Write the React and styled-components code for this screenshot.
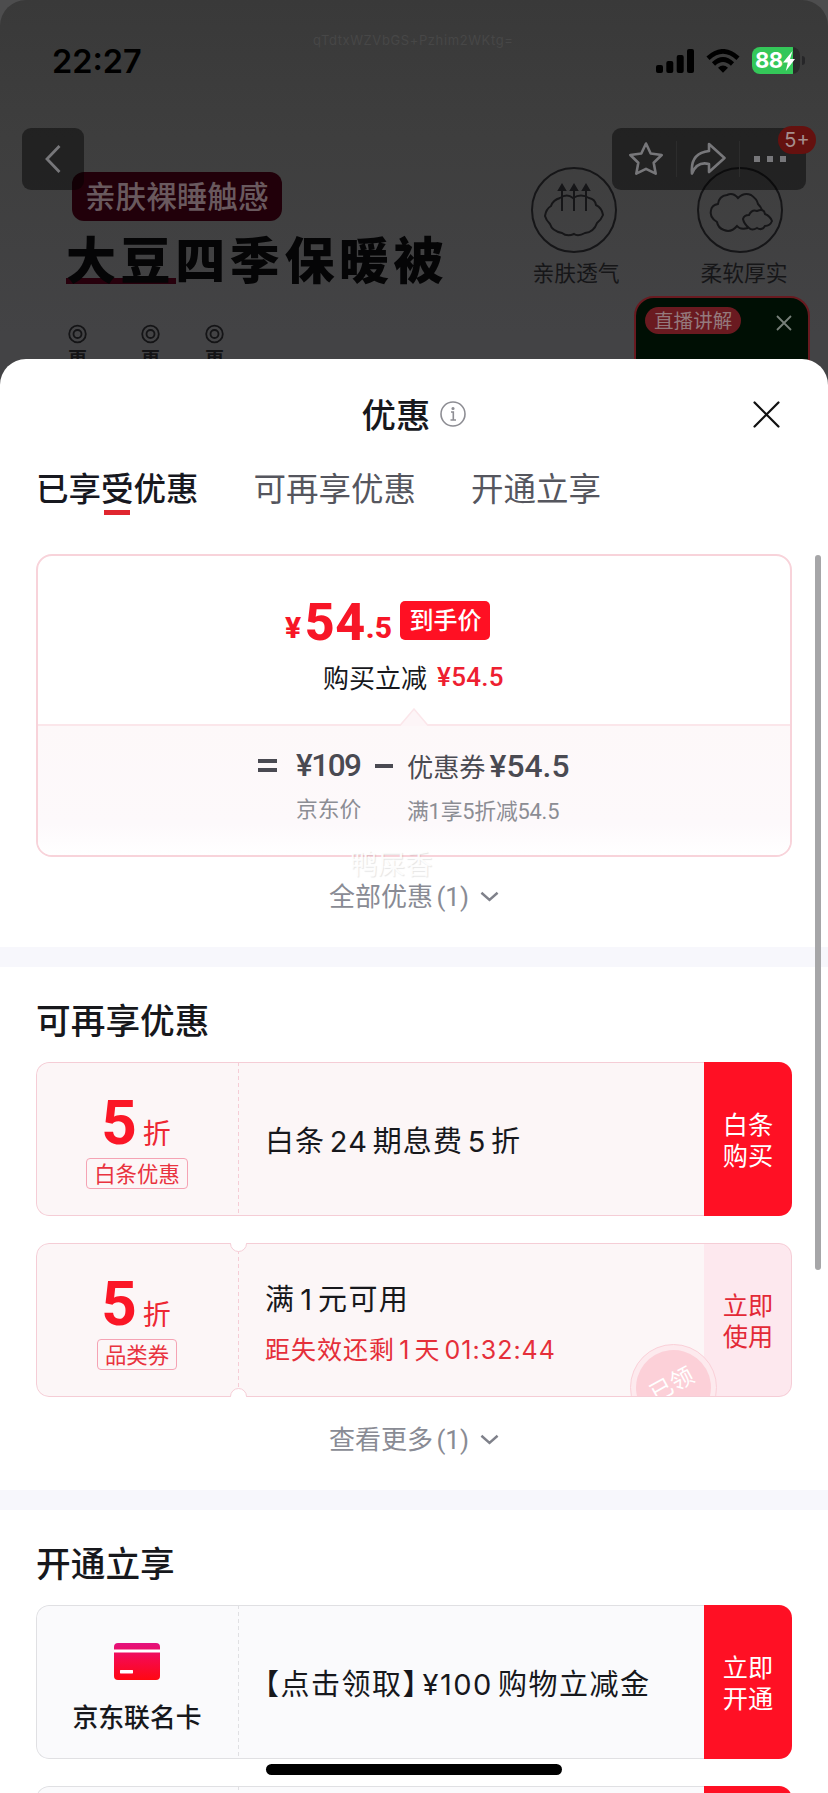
import React from 'react';
import styled, { createGlobalStyle, css } from 'styled-components';

const cjk = '"Noto Sans CJK SC", sans-serif';

const Global = createGlobalStyle`
  *, *::before, *::after { box-sizing: border-box; }
  body { margin: 0; background: #4d4d4e; font-family: Inter, ${cjk}; }
  svg { display: block; flex: none; }
`;

const Screen = styled.main`
  position: relative;
  width: 828px;
  height: 1793px;
  overflow: hidden;
  display: flex;
  flex-direction: column;
`;

/* ---------- dimmed product page ---------- */

const Backdrop = styled.header`
  position: relative;
  height: 392px;
  flex: none;
  border-radius: 26px 26px 0 0;
  background: linear-gradient(#393939, #3e3e3e 35%, #434345 85%);
`;

const StatusBar = styled.div`
  display: flex;
  align-items: center;
  height: 120px;
  padding: 1px 23px 0 52px;
`;

const Clock = styled.time`
  flex: 1;
  padding-top: 2px;
  font: 600 32.5px/40px Inter, sans-serif;
  color: #000;
`;

const StatusIcons = styled.div`
  display: flex;
  align-items: center;
  gap: 12px;
`;

const BatteryWrap = styled.div`
  display: flex;
  align-items: center;
  gap: 2px;
  &::after {
    content: '';
    width: 3px;
    height: 9px;
    border-radius: 0 3px 3px 0;
    background: #262628;
  }
`;

const Battery = styled.div`
  display: flex;
  align-items: center;
  width: 48px;
  height: 27px;
  border-radius: 8px;
  padding-left: 3px;
  background: linear-gradient(90deg, #34c759 41px, #2a2a2a 41px);
  color: #fff;
  font: 700 22px/27px Inter, sans-serif;
  letter-spacing: -0.5px;
`;

const Serial = styled.div`
  position: absolute;
  top: 32px;
  left: 313px;
  font: 13px/16px Inter, sans-serif;
  letter-spacing: 0.6px;
  color: #474747;
  white-space: nowrap;
`;

const Banner = styled.div`
  display: flex;
  justify-content: space-between;
  padding: 52px 44px 0 66px;
`;

const BannerCopy = styled.div`
  display: flex;
  flex-direction: column;
  align-items: flex-start;
`;

const Ribbon = styled.div`
  height: 49px;
  margin-left: 6px;
  padding: 0 13px;
  border-radius: 12px;
  background: #21000a;
  color: #69595e;
  font: 500 30.6px/46px ${cjk};
`;

const ProductTitle = styled.h1`
  position: relative;
  z-index: 1;
  margin: 8px 0 0;
  height: 56px;
  font: 900 50px/56px ${cjk};
  letter-spacing: 4.6px;
  color: #050506;
`;

const TitleRule = styled.div`
  width: 110px;
  height: 6px;
  margin-top: -7px;
  background: #27000c;
`;

const Specs = styled.div`
  display: flex;
  padding-top: 40px;
  color: #141416;
`;

const Spec = styled.div`
  width: ${(p) => p.$width}px;
  padding-left: 2px;
  font: 700 19px/28px ${cjk};
`;

const Features = styled.div`
  display: flex;
  gap: 78px;
`;

const Feature = styled.div`
  display: flex;
  flex-direction: column;
  align-items: center;
  width: 88px;
  margin-top: -5px;
  gap: 3px;
  color: #161618;
  font: 400 21.8px/32px ${cjk};
  white-space: nowrap;
`;

const FeatureLabel = styled.span`
  padding-left: ${(p) => p.$shift}px;
`;

const NavBar = styled.nav`
  position: absolute;
  top: 128px;
  left: 22px;
  right: 22px;
  display: flex;
  justify-content: space-between;
`;

const NavGroup = styled.div`
  position: relative;
  display: flex;
  align-items: center;
  height: 62px;
  width: ${(p) => p.$width}px;
  padding: ${(p) => p.$pad || 0};
  border-radius: 9px;
  background: rgba(0, 0, 0, 0.45);
  color: #77777a;
`;

const NavButton = styled.div`
  flex: 1;
  height: 36px;
  display: flex;
  align-items: center;
  justify-content: center;
  & + & { border-left: 1px solid #2c2c2c; }
`;

const Count = styled.span`
  position: absolute;
  top: -2px;
  right: -10px;
  width: 38px;
  height: 28px;
  border-radius: 14px;
  background: #65110f;
  color: #a58e8d;
  text-align: center;
  font: 400 20px/29px Inter, sans-serif;
`;

const LiveCard = styled.aside`
  position: absolute;
  top: 296px;
  right: 18px;
  width: 176px;
  height: 96px;
  padding: 9px 16px 0 9px;
  display: flex;
  align-items: flex-start;
  justify-content: space-between;
  border: 2px solid #681a20;
  border-radius: 20px 20px 0 0;
  background: #000f04;
`;

const LiveTag = styled.span`
  height: 27px;
  padding: 0 9px;
  border-radius: 14px;
  background: #6a1a20;
  color: #94797c;
  font: 400 19.6px/26px ${cjk};
`;

/* ---------- bottom sheet ---------- */

const Sheet = styled.section`
  position: relative;
  flex: 1;
  margin-top: -33px;
  border-radius: 26px 26px 0 0;
  background: #fff;
  color: #17181c;
  overflow: hidden;
`;

const SheetHeader = styled.div`
  display: grid;
  grid-template-columns: 100px 1fr 100px;
  align-items: center;
  height: 110px;
`;

const SheetTitle = styled.h2`
  grid-column: 2;
  display: flex;
  justify-content: center;
  align-items: center;
  gap: 10px;
  margin: 0;
  font: 500 34.4px/44px ${cjk};
  span { margin-top: -2px; }
`;

const Close = styled.div`
  padding-left: 25px;
`;

const Tabs = styled.div`
  display: flex;
  gap: 55px;
  height: 85px;
  padding: 0 36px;
`;

const Tab = styled.div`
  display: flex;
  flex-direction: column;
  align-items: center;
  margin-top: -2px;
  font: ${(p) => (p.$active ? 500 : 400)} 32.5px/40px ${cjk};
  color: ${(p) => (p.$active ? '#17181f' : '#55565e')};
  &::after {
    content: '';
    width: 26px;
    height: 5px;
    margin-top: 3px;
    background: ${(p) => (p.$active ? '#e0262f' : 'transparent')};
  }
`;

const PriceCard = styled.div`
  height: 303px;
  margin: 0 36px;
  border: 2px solid #f8d3da;
  border-radius: 16px;
  overflow: hidden;
`;

const PriceTop = styled.div`
  height: 168px;
  padding-top: 44px;
`;

const FinalPrice = styled.div`
  display: flex;
  align-items: flex-end;
  height: 42px;
  padding-left: 247px;
  color: #f71627;
  font-family: Roboto, ${cjk};
`;

const Amount = styled.span`
  font-size: ${(p) => p.$size}px;
  font-weight: 800;
  line-height: 38px;
  height: ${(p) => p.$height || 38}px;
  letter-spacing: ${(p) => p.$gap || 0}px;
`;

const PriceTag = styled.span`
  width: 90px;
  height: 39px;
  margin: 0 0 2px 8px;
  border-radius: 5px;
  background: #ff1023;
  color: #fff;
  text-align: center;
  font: 500 24px/36px ${cjk};
`;

const Saving = styled.div`
  display: flex;
  align-items: center;
  gap: 10px;
  height: 36px;
  margin-top: 17px;
  padding-left: 285px;
  font: 400 26px/36px ${cjk};
`;

const Money = styled.span`
  font: 500 ${(p) => p.$size}px/36px Roboto, sans-serif;
  letter-spacing: ${(p) => p.$gap || 0}px;
  color: ${(p) => p.$color || 'inherit'};
`;

const Formula = styled.div`
  position: relative;
  height: 132px;
  padding: 20px 0 0 220px;
  border-top: 2px solid #fbe6ea;
  background: linear-gradient(#fdf8f9, #fdf9fb 75%, #fff);
  display: grid;
  grid-template-columns: 38px 79px 32px auto;
  grid-template-rows: 40px 47px;
  align-items: center;
  align-content: start;
  justify-content: start;
  color: #4a4a52;
  white-space: nowrap;
`;

const Notch = styled.svg`
  position: absolute;
  left: 362px;
  top: -18px;
`;

const Term = styled.div`
  display: flex;
  align-items: center;
  gap: ${(p) => p.$gap || 0}px;
  font: 400 26.2px/34px ${cjk};
`;

const Note = styled.div`
  grid-column: ${(p) => p.$col};
  padding-top: ${(p) => p.$drop || 0}px;
  font: 400 21.8px/30px Roboto, ${cjk};
  letter-spacing: ${(p) => p.$gap || 0}px;
  color: #8c8d94;
`;

const More = styled.div`
  position: relative;
  display: flex;
  justify-content: center;
  align-items: center;
  height: ${(p) => p.$height}px;
  padding-bottom: ${(p) => p.$lift}px;
  gap: 11px;
  color: #898b94;
  font: 400 26px/36px Roboto, ${cjk};
  word-spacing: -3px;
`;

const Watermark = styled.span`
  position: absolute;
  left: 350px;
  top: -14px;
  color: rgba(255, 255, 255, 0.92);
  text-shadow: 1px 1px 1px rgba(0, 0, 0, 0.1);
  font: 400 27.5px/38px ${cjk};
`;

const Band = styled.div`
  height: 20px;
  background: #f7f7fc;
`;

const SectionTitle = styled.h3`
  margin: 0;
  height: 95px;
  padding: 30px 36px 0;
  font: 500 34.7px/44px ${cjk};
`;

const CouponList = styled.div`
  display: flex;
  flex-direction: column;
  gap: 27px;
  padding: 0 36px;
`;

const tones = {
  pink: { bg: '#fcf6f7', line: '#f5cdd6' },
  gray: { bg: '#fafafc', line: '#e0e0e3' },
};

const CouponBox = styled.article`
  position: relative;
  display: flex;
  height: 154px;
  border-radius: 13px;
  overflow: hidden;
  background: ${(p) => tones[p.$tone].bg};
  color: #17181c;
  &::after {
    content: '';
    position: absolute;
    inset: 0;
    border: 1px solid ${(p) => tones[p.$tone].line};
    border-right-width: ${(p) => (p.$open ? 0 : 1)}px;
    ${(p) => p.$open && css`right: 88px; border-radius: 13px 0 0 13px;`}
    ${(p) => !p.$open && css`border-radius: 13px;`}
  }
`;

const Value = styled.div`
  width: 202px;
  display: flex;
  flex-direction: column;
  align-items: center;
  padding-top: 31px;
`;

const DashLine = styled.div`
  width: 1px;
  background: repeating-linear-gradient(${(p) => tones[p.$tone].line} 0 4px, transparent 4px 7px);
`;

const Discount = styled.div`
  display: flex;
  align-items: baseline;
  gap: 7px;
  height: 60px;
  margin-left: -2px;
  color: #ee2733;
  font: 400 28px/60px ${cjk};
  b {
    color: #fb1626;
    font: 700 62px/60px Roboto, sans-serif;
    letter-spacing: -1px;
  }
`;

const Kind = styled.div`
  height: 31px;
  margin-top: 5px;
  padding: 0 7px;
  border: 1.5px solid #f5a3b4;
  border-radius: 4px;
  color: #e9333f;
  font: 400 21.4px/27px ${cjk};
`;

const Brand = styled.div`
  display: flex;
  flex-direction: column;
  align-items: center;
  gap: 18px;
  padding-top: 7px;
  font: 500 25.8px/36px ${cjk};
`;

const Detail = styled.div`
  flex: 1;
  display: flex;
  flex-direction: column;
  justify-content: center;
  gap: 14px;
  padding: ${(p) => p.$drop}px 0 0 ${(p) => p.$inset}px;
  white-space: nowrap;
`;

const Headline = styled.div`
  font: 400 29px/36px Inter, ${cjk};
  letter-spacing: ${(p) => p.$gap}px;
  word-spacing: -4.6px;
`;

const TightBracket = styled.span`
  margin-right: 4px;
  font-feature-settings: 'halt';
`;

const Expiry = styled.div`
  color: #e52f3a;
  font: 400 25px/36px Inter, ${cjk};
  letter-spacing: ${(p) => p.$gap}px;
  word-spacing: -3.9px;
`;

const Action = styled.div`
  width: 88px;
  display: flex;
  justify-content: center;
  align-items: center;
  text-align: center;
  background: ${(p) => (p.$soft ? '#fde8ee' : '#ff1024')};
  color: ${(p) => (p.$soft ? '#e32936' : '#fff')};
  font: 400 25.2px/31px ${cjk};
  white-space: pre;
`;

const Punch = styled.i`
  position: absolute;
  z-index: 1;
  left: 194px;
  width: 17px;
  height: 17px;
  border-radius: 50%;
  border: 1px solid #f5cdd6;
  background: #fff;
  ${(p) => (p.$bottom ? 'bottom: -8px;' : 'top: -8px;')}
`;

const Stamp = styled.div`
  position: absolute;
  left: 594px;
  top: 101px;
  width: 87px;
  height: 87px;
  border: 1.5px solid #fad0d8;
  border-radius: 50%;
  padding: 5px;
  background: #fdeaee;
  span {
    display: block;
    height: 100%;
    border-radius: 50%;
    background: #fcd0d8;
    color: #fff;
    text-align: center;
    font: 400 23px/64px ${cjk};
    transform: rotate(-29deg);
  }
`;

const ScrollThumb = styled.div`
  position: absolute;
  right: 7px;
  top: 196px;
  width: 6px;
  height: 715px;
  border-radius: 3px;
  background: #a6a6a8;
`;

const HomeIndicator = styled.div`
  position: absolute;
  left: 266px;
  bottom: 18px;
  width: 296px;
  height: 11px;
  border-radius: 6px;
  background: #000;
`;

const Chevron = () => (
  <svg width="19" height="12" viewBox="0 0 20 12" fill="none" stroke="#7f818a" strokeWidth="2.6">
    <path d="M1.5 1.500l8.500 7.500L18.500 1.500" />
  </svg>
);

const Cross = ({ size, color, weight }) => (
  <svg width={size} height={size} viewBox="0 0 26 26" fill="none" stroke={color} strokeWidth={weight} strokeLinecap="round">
    <path d="M1.5 1.5l23 23M24.5 1.5l-23 23" />
  </svg>
);

const Signal = () => (
  <svg width="38" height="24" viewBox="0 0 38 24">
    <rect x="0" y="16" width="7" height="8" rx="2" />
    <rect x="10.3" y="12" width="7" height="12" rx="2" />
    <rect x="20.7" y="6" width="7" height="18" rx="2" />
    <rect x="31" y="0" width="7" height="24" rx="2" />
  </svg>
);

const Wifi = () => (
  <svg width="34" height="24" viewBox="0 0 34 24" fill="none" stroke="#000" strokeWidth="4.6">
    <path d="M2 9.2Q17-4.5 32 9.2" />
    <path d="M7.5 15Q17 6 26.5 15" />
    <path d="M17 23.8l-5-5q5-4.4 10 0z" fill="#000" stroke="none" />
  </svg>
);

const Bolt = () => (
  <svg width="12" height="20" viewBox="0 0 12 20" fill="#fff">
    <path d="M9.5 0L0 11.500h4.800L2.800 20 12 8H7z" />
  </svg>
);

const Ring = () => (
  <svg width="20" height="20" viewBox="0 0 20 20" fill="none" stroke="#141416" strokeWidth="1.8">
    <circle cx="9.5" cy="10" r="8.3" />
    <circle cx="9.5" cy="10" r="4" />
  </svg>
);

const BreathIcon = () => (
  <svg width="86" height="86" viewBox="0 0 86 86" fill="none" stroke="#161618" strokeWidth="2">
    <circle cx="43" cy="43" r="42" />
    <path d="M29 31Q36 26 42 31Q50 26 58 31Q64 32 65 38Q71 41 72 48Q70 53 66 56Q63 65 54 66Q47 70 43 67Q36 70 31 66Q21 64 19 57Q15 53 14 49Q15 42 20 39Q22 33 29 31" />
    <path d="M31 44V20M43 44V20M55 44V20" />
    <path d="M28 23l3-5 3 5zM40 23l3-5 3 5zM52 23l3-5 3 5z" fill="#161618" />
  </svg>
);

const CloudIcon = () => (
  <svg width="86" height="86" viewBox="0 0 86 86" fill="none" stroke="#161618" strokeWidth="2">
    <circle cx="43" cy="43" r="42" />
    <path d="M51 61Q43 63 40 59Q34 66 27 63Q21 61 20 55Q12 50 14 43Q15 38 21 37Q22 29 30 28Q36 25 41 31Q47 25 54 28Q60 32 61 37Q64 40 65 43" />
    <path d="M52 61Q47 57 46 52Q47 48 52 48Q55 42 60 44Q67 41 68 47Q73 49 75 54Q73 59 68 59Q65 64 60 61Q55 64 52 61Z" />
  </svg>
);

const CardIcon = () => (
  <svg width="46" height="37" viewBox="0 0 46 37">
    <defs>
      <linearGradient id="cardFill" x1="0" y1="0" x2="0" y2="1">
        <stop offset="0" stopColor="#e3127f" />
        <stop offset="0.45" stopColor="#f60a49" />
        <stop offset="1" stopColor="#ff0812" />
      </linearGradient>
    </defs>
    <rect width="46" height="37" rx="4" fill="url(#cardFill)" />
    <rect y="6.5" width="46" height="3" fill="#fff" />
    <rect x="6" y="27" width="13" height="3.4" rx="0.6" fill="#fff" />
  </svg>
);

const Coupon = ({ tone = 'pink', value, kind, brand, inset, drop = 5, action, soft, notched, stamp, children }) => (
  <CouponBox $tone={tone} $open={!soft}>
    <Value>
      {brand && <Brand><CardIcon />{brand}</Brand>}
      {value && (
        <>
          <Discount><b>{value}</b>折</Discount>
          <Kind>{kind}</Kind>
        </>
      )}
    </Value>
    <DashLine $tone={tone} />
    <Detail $inset={inset} $drop={drop}>{children}</Detail>
    <Action $soft={soft}>{action}</Action>
    {notched && <><Punch /><Punch $bottom /></>}
    {stamp && <Stamp><span>{stamp}</span></Stamp>}
  </CouponBox>
);

export default function App() {
  return (
    <Screen>
      <Global />
      <Backdrop>
        <Serial>qTdtxWZVbGS+Pzhim2WKtg=</Serial>
        <StatusBar>
          <Clock>22:27</Clock>
          <StatusIcons>
            <Signal />
            <Wifi />
            <BatteryWrap><Battery>88<Bolt /></Battery></BatteryWrap>
          </StatusIcons>
        </StatusBar>
        <Banner>
          <BannerCopy>
            <Ribbon>亲肤裸睡触感</Ribbon>
            <ProductTitle>大豆四季保暖被</ProductTitle>
            <TitleRule />
            <Specs>
              <Spec $width={73}><Ring />更</Spec>
              <Spec $width={64}><Ring />更</Spec>
              <Spec $width={64}><Ring />更</Spec>
            </Specs>
          </BannerCopy>
          <Features>
            <Feature><BreathIcon /><FeatureLabel $shift={4}>亲肤透气</FeatureLabel></Feature>
            <Feature><CloudIcon /><FeatureLabel $shift={8}>柔软厚实</FeatureLabel></Feature>
          </Features>
        </Banner>
        <NavBar>
          <NavGroup $width={62}>
            <NavButton>
              <svg width="18" height="30" viewBox="0 0 18 30" fill="none" stroke="currentColor" strokeWidth="2.8">
                <path d="M15.5 2L3 15l12.5 13" />
              </svg>
            </NavButton>
          </NavGroup>
          <NavGroup $width={194} $pad="0 5px 0 3px">
            <NavButton>
              <svg width="36" height="36" viewBox="0 0 36 36" fill="none" stroke="currentColor" strokeWidth="2.6" strokeLinejoin="round">
                <path d="M18 2.5l4.7 10 11 1.500-8 7.700 2 11L18 27.800 8.300 32.700l2-11-8-7.700 11-1.500z" />
              </svg>
            </NavButton>
            <NavButton>
              <svg width="38" height="34" viewBox="0 0 38 34" fill="none" stroke="currentColor" strokeWidth="2.6" strokeLinejoin="round">
                <path d="M20 2l15.500 14L20 30V22Q8 19 3 31.500Q1 11 20 9z" />
              </svg>
            </NavButton>
            <NavButton>
              <svg width="32" height="6" viewBox="0 0 32 6" fill="currentColor">
                <path d="M0 0h6v6H0zM13 0h6v6h-6zM26 0h6v6h-6z" />
              </svg>
            </NavButton>
            <Count>5+</Count>
          </NavGroup>
        </NavBar>
        <LiveCard>
          <LiveTag>直播讲解</LiveTag>
          <svg width="16" height="32" viewBox="0 0 16 32" fill="none" stroke="#77807a" strokeWidth="1.8">
            <path d="M1 9l14 14M15 9L1 23" />
          </svg>
        </LiveCard>
      </Backdrop>

      <Sheet>
        <SheetHeader>
          <SheetTitle>
            <span>优惠</span>
            <svg width="26" height="26" viewBox="0 0 26 26" fill="none" stroke="#8d8d93" strokeWidth="1.6">
              <circle cx="13" cy="13" r="12" />
              <path d="M11 11h2.3v8M10.5 19h5.500" />
              <circle cx="13" cy="7.5" r="0.8" fill="#8d8d93" />
            </svg>
          </SheetTitle>
          <Close><Cross size={27} color="#111" weight={2.2} /></Close>
        </SheetHeader>
        <Tabs>
          <Tab $active>已享受优惠</Tab>
          <Tab>可再享优惠</Tab>
          <Tab>开通立享</Tab>
        </Tabs>

        <PriceCard>
          <PriceTop>
            <FinalPrice>
              <Amount $size={30} $height={33} $gap={3.5}>¥</Amount>
              <Amount $size={52} $height={38} $gap={0.5}>54</Amount>
              <Amount $size={30} $height={33} $gap={0.3}>.5</Amount>
              <PriceTag>到手价</PriceTag>
            </FinalPrice>
            <Saving>购买立减<Money $size={26} $gap={0.3} $color="#ee2030">¥54.5</Money></Saving>
          </PriceTop>
          <Formula>
            <Notch width="28" height="19" viewBox="0 0 28 19">
              <path d="M0 18L14 1l14 17z" fill="#fdf5f7" />
              <path d="M0 17.5L14 1l14 16.5" fill="none" stroke="#fbe6ea" strokeWidth="1.5" />
            </Notch>
            <svg width="19" height="14" viewBox="0 0 19 14" fill="#4a4a52">
              <path d="M0 0h19v4H0zM0 9h19v4H0z" />
            </svg>
            <Money $size={31.5} $gap={-1.5}>¥109</Money>
            <svg width="18" height="4" viewBox="0 0 18 4" fill="#4a4a52"><path d="M0 0h18v4H0z" /></svg>
            <Term $gap={4}>优惠券<Money $size={31.8}>¥54.5</Money></Term>
            <Note $col={2}>京东价</Note>
            <Note $col={4} $drop={4} $gap={-0.2}>满1享5折减54.5</Note>
          </Formula>
        </PriceCard>
        <More $height={90} $lift={11}>
          <span>全部优惠 (1)</span>
          <Chevron />
          <Watermark>鸭屎香</Watermark>
        </More>
        <Band />

        <SectionTitle>可再享优惠</SectionTitle>
        <CouponList>
          <Coupon value="5" kind="白条优惠" inset={26} action={'白条\n购买'}>
            <Headline $gap={1.1}>白条 24 期息费 5 折</Headline>
          </Coupon>
          <Coupon value="5" kind="品类券" inset={26} drop={10} action={'立即\n使用'} soft notched stamp="已领">
            <Headline $gap={1.3}>满 1 元可用</Headline>
            <Expiry $gap={1}>距失效还剩 1 天 01:32:44</Expiry>
          </Coupon>
        </CouponList>
        <More $height={93} $lift={7}>
          <span>查看更多 (1)</span>
          <Chevron />
        </More>
        <Band />

        <SectionTitle>开通立享</SectionTitle>
        <CouponList>
          <Coupon tone="gray" brand="京东联名卡" inset={11} action={'立即\n开通'}>
            <Headline $gap={1.5}>【点击领取<TightBracket>】</TightBracket>¥100 购物立减金</Headline>
          </Coupon>
          <Coupon tone="gray" inset={12} />
        </CouponList>
        <ScrollThumb />
      </Sheet>
      <HomeIndicator />
    </Screen>
  );
}
